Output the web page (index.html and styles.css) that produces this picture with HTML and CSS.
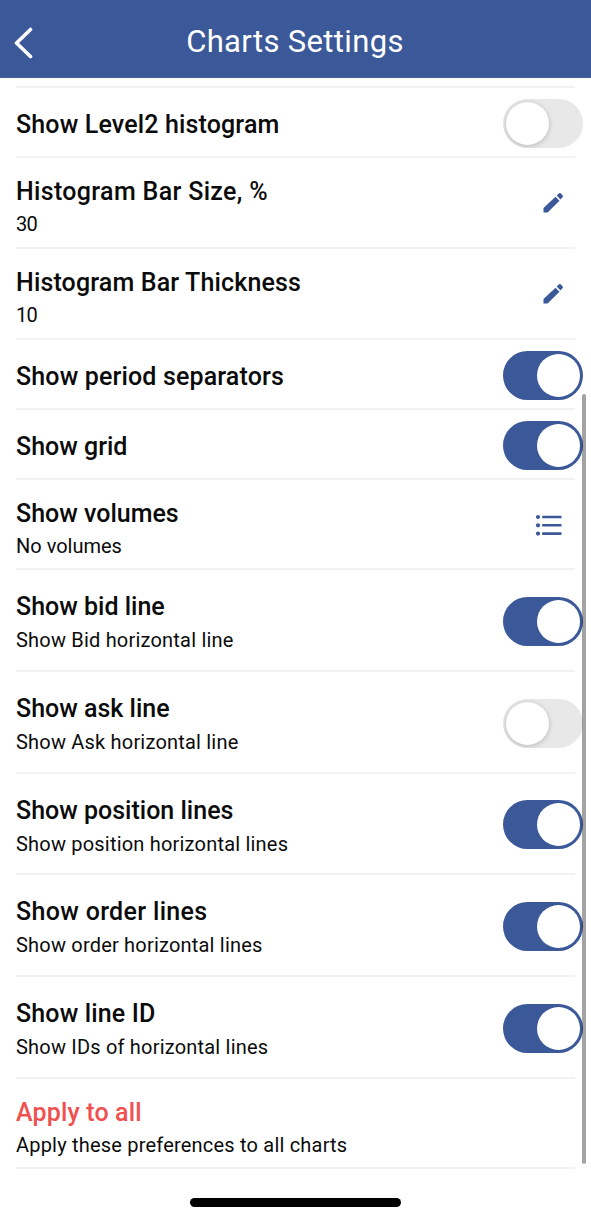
FILE: index.html
```
<!DOCTYPE html>
<html lang="en">
<head>
  <meta charset="UTF-8">
  <title>Charts Settings</title>
  <link rel="stylesheet" href="styles.css">
</head>
<body>
  <header class="topbar">
    <svg class="back" width="20" height="32" viewBox="0 0 20 32"><path d="M17.5 2.5L3.5 16l14 13.5"/></svg>
    <h1>Charts Settings</h1>
  </header>

  <main class="settings">
    <div class="row short">
      <div class="text"><p class="name">Show Level2 histogram</p></div>
      <div class="toggle"></div>
    </div>
    <div class="row">
      <div class="text"><p class="name wide">Histogram Bar Size, %</p><p class="info value">30</p></div>
      <svg class="icon pencil" width="28" height="28" viewBox="0 0 28 28"><path d="M4.5 23.5v-4.5L16.5 7.7l4 4.1L8.6 23.5z"/><path d="M17.7 6.6l2.4-2.3q.8-.7 1.6 0l2 2.1q.7.8 0 1.6l-2.2 2.4z"/></svg>
    </div>
    <div class="row">
      <div class="text"><p class="name">Histogram Bar Thickness</p><p class="info value">10</p></div>
      <svg class="icon pencil" width="28" height="28" viewBox="0 0 28 28"><path d="M4.5 23.5v-4.5L16.5 7.7l4 4.1L8.6 23.5z"/><path d="M17.7 6.6l2.4-2.3q.8-.7 1.6 0l2 2.1q.7.8 0 1.6l-2.2 2.4z"/></svg>
    </div>
    <div class="row short">
      <div class="text"><p class="name">Show period separators</p></div>
      <div class="toggle on"></div>
    </div>
    <div class="row short">
      <div class="text"><p class="name tight">Show grid</p></div>
      <div class="toggle on"></div>
    </div>
    <div class="row">
      <div class="text"><p class="name tight">Show volumes</p><p class="info tight">No volumes</p></div>
      <svg class="icon" width="28" height="28" viewBox="0 0 28 28"><circle cx="3" cy="6" r="2.1"/><circle cx="3" cy="14.3" r="2.1"/><circle cx="3" cy="22.6" r="2.1"/><path d="M7.2 4.7h19.3v2.6H7.2zM7.2 13h19.3v2.6H7.2zM7.2 21.3h19.3v2.6H7.2z"/></svg>
    </div>
    <div class="row tall">
      <div class="text"><p class="name tight">Show bid line</p><p class="info">Show Bid horizontal line</p></div>
      <div class="toggle on"></div>
    </div>
    <div class="row tall">
      <div class="text"><p class="name tight">Show ask line</p><p class="info">Show Ask horizontal line</p></div>
      <div class="toggle"></div>
    </div>
    <div class="row tall">
      <div class="text"><p class="name tight">Show position lines</p><p class="info">Show position horizontal lines</p></div>
      <div class="toggle on"></div>
    </div>
    <div class="row tall">
      <div class="text"><p class="name wide">Show order lines</p><p class="info">Show order horizontal lines</p></div>
      <div class="toggle on"></div>
    </div>
    <div class="row tall">
      <div class="text"><p class="name">Show line ID</p><p class="info">Show IDs of horizontal lines</p></div>
      <div class="toggle on"></div>
    </div>
    <div class="row">
      <div class="text"><p class="name apply">Apply to all</p><p class="info">Apply these preferences to all charts</p></div>
    </div>
  </main>

  <div class="scrollbar"></div>
  <div class="home-bar"></div>
</body>
</html>
```

FILE: styles.css
```
* { box-sizing: border-box; }

body {
  margin: 0;
  height: 1219px;
  position: relative;
  overflow: hidden;
  background: #fff;
  color: #0b0b0b;
  font-family: Roboto, "Liberation Sans", sans-serif;
}

h1, p { margin: 0; }

.topbar {
  height: 78px;
  padding: 7px 14px 0 13px;
  display: grid;
  grid-template-columns: 20px 1fr 20px;
  align-items: center;
  background: #3b5998;
  border-bottom: 1px solid #4b5f8e;
  color: #fff;
}
.topbar h1 {
  text-align: center;
  font-size: 31px;
  line-height: 40px;
  font-weight: 400;
  letter-spacing: .35px;
}
.back {
  margin-top: 2px;
  fill: none;
  stroke: #fff;
  stroke-width: 3.6;
  stroke-linecap: round;
  stroke-linejoin: round;
}

.settings {
  margin: 8px 16px 0;
  border-top: 2px solid #f2f2f3;
}
.row {
  height: 90.75px;
  display: flex;
  justify-content: space-between;
  align-items: center;
  border-bottom: 2px solid #f2f2f3;
}
.row.short { height: 70px; }
.row.tall { height: 101.7px; }

.text {
  align-self: flex-start;
  padding-top: 19px;
  white-space: nowrap;
}
.short .text { padding-top: 22px; }
.tall .text { padding-top: 22px; }

.name {
  font-size: 25px;
  line-height: 30px;
  font-weight: 500;
  letter-spacing: .15px;
}
.info {
  margin-top: 4px;
  font-size: 20px;
  line-height: 26px;
  letter-spacing: .2px;
}
.tall .info { margin-top: 5px; }
.name.wide { letter-spacing: .33px; }
.tight { letter-spacing: 0; }
.value { letter-spacing: -.7px; }
.apply { color: #f0504f; }

.icon {
  margin: 2px 12px 0 0;
  fill: #3b5998;
}
.icon.pencil { margin-right: 8px; }

.toggle {
  width: 80px;
  height: 49px;
  margin: 3px -8px 0 0;
  padding: 3px;
  border-radius: 25px;
  background: #e8e8e8;
  overflow: hidden;
}
.toggle::before {
  content: "";
  display: block;
  width: 43px;
  height: 43px;
  border-radius: 50%;
  background: #fff;
  box-shadow: 0 1px 5px rgba(0, 0, 0, .22);
}
.toggle.on { background: #3b5998; }
.toggle.on::before {
  margin-left: auto;
  box-shadow: none;
}

.scrollbar {
  position: absolute;
  top: 394px;
  right: 5px;
  width: 4px;
  height: 770px;
  border-radius: 2px;
  background: rgba(0, 0, 0, .36);
}

.home-bar {
  position: absolute;
  left: 190px;
  bottom: 12px;
  width: 211px;
  height: 9px;
  border-radius: 5px;
  background: #000;
}
```
